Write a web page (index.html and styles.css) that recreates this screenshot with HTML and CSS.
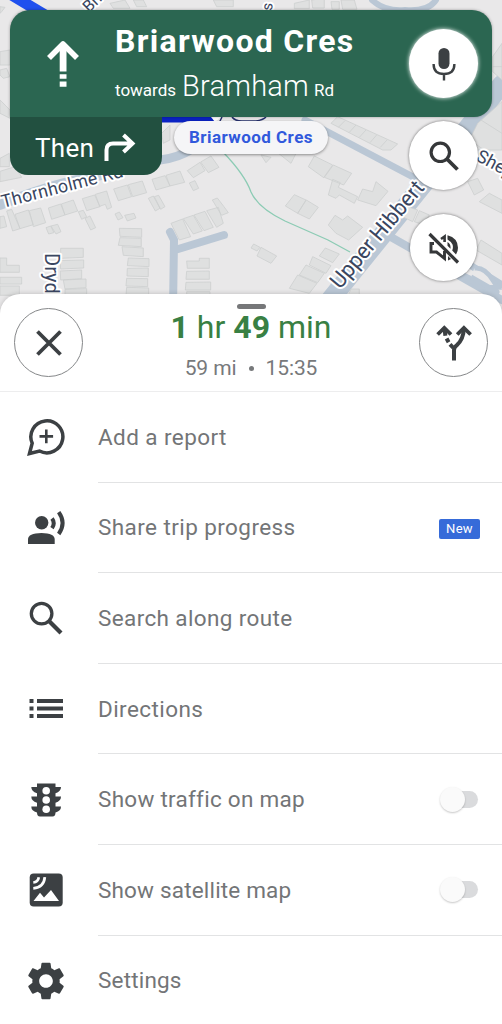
FILE: index.html
```html
<!DOCTYPE html>
<html lang="en">
<head>
<meta charset="utf-8">
<title>Navigation</title>
<link rel="stylesheet" href="styles.css">
</head>
<body>
<div class="phone">
  <svg class="map" viewBox="0 0 502 320" width="502" height="320">
    <g class="roads">
      <path d="M173 310L174 240L170 232M175 250L224 235" stroke-width="8"/>
      <path d="M160 160Q178 158 192 149" stroke-width="9"/>
      <path d="M0 205Q60 180 120 172" stroke-width="10"/>
      <path d="M322 310L430 176L502 84" stroke-width="19"/>
      <path d="M305 120L415 178" stroke-width="7"/>
      <path d="M382 232L502 300" stroke-width="8"/>
      <path d="M470 265L502 285M463 276L496 292" stroke-width="7"/>
      <path d="M372 0Q385 12 405 10Q428 12 436 0" stroke-width="6"/>
    </g>
    <path class="footpath" d="M223 152Q245 175 251 192Q258 208 285 221L328 240L350 252"/>
    <g class="buildings" transform="translate(0 150) scale(.3333)">
      <path d="M0 64L45 50L65 82L0 95zM0 200L12 198L20 230L0 235zM20 183L35 178L60 236L38 243zM45 193L85 180L100 224L60 236zM88 182L122 174L137 218L100 230zM145 174L182 162L195 195L155 208zM184 162L220 150L233 183L195 195zM235 185L250 181L260 200L245 208zM255 205L270 198L287 233L272 240zM247 146L284 135L300 170L260 182zM286 133L320 123L335 172L322 178L316 163L299 169zM341 117L382 105L395 140L355 152zM385 104L427 93L440 128L398 140zM456 88L495 77L510 108L468 120zM498 76L540 63L554 97L510 108zM562 62L600 37L615 62L580 83zM602 36L633 18L657 52L625 68zM568 99L585 92L596 115L580 122zM445 145L460 138L480 175L466 183zM463 140L476 136L495 170L482 178zM138 233L152 228L162 248L146 252zM153 228L173 223L183 245L168 252zM345 192L358 186L369 203L354 210zM374 196L402 190L408 204L382 213zM182 295H250V322L182 325zM180 332L251 330V354L182 357zM181 363L245 360V386L182 390zM190 390L258 387V413L195 417zM195 418L260 416V450H195zM358 235L425 236V262L360 259zM360 263L424 265V290L355 286zM366 290L430 294V320L370 316zM385 324L447 326V350L382 347zM382 355L445 354V380L381 378zM380 385L443 386V410L378 408zM380 412L446 414V440L378 437zM0 324H20V346H58V367H0zM0 382H65V402H0zM0 408H58V436H0zM513 220L548 207L572 260L538 270zM550 206L580 196L607 243L580 252zM582 195L615 184L640 232L612 242zM620 182L655 172L670 220L650 232zM637 150L652 144L672 170L685 188L665 196zM560 333H598V325H628V355H562zM560 364L628 363V388H558zM558 397L632 396V420H556zM560 425H630V445H560z"/>
    </g>
    <g class="buildings" transform="translate(251 150) scale(.3333)">
      <path d="M190 18L245 45L218 83L172 50zM247 45L302 70L278 105L220 82zM245 88L268 98L262 112L320 140L310 160L265 135L255 145L232 135zM335 117L365 125L375 95L411 124L375 167L320 150zM130 134L165 150L140 190L103 168zM166 150L202 172L175 207L140 190zM232 225L252 196L275 210L290 198L335 232L293 270L255 250zM30 292L77 318L60 340L18 318zM8 282L27 292L18 303L0 294zM223 294L265 312L245 338L205 318zM185 320L240 347L225 370L175 345zM165 345L220 370L200 398L145 375zM140 375L198 400L175 430L115 415zM30 15L60 22L45 38zM70 0H140L120 40zM300 417H325V440H290zM650 95L680 85L698 120L670 135zM715 130L753 150V190L685 155zM690 270L753 310V345L675 300zM470 170L500 180L485 215L455 200zM505 182L535 195L520 225L490 215z"/>
      <path class="outline" d="M670 355Q700 350 725 390L740 412L715 412L660 380"/>
    </g>
    <g class="buildings" transform="translate(251 0) scale(.3333)">
      <path d="M130 10L175 0V26H130zM182 0L220 -5V24H185zM240 5H265V28H243zM270 0H310L318 28H275zM240 370L260 350L440 432L420 450L395 450zM262 382L282 362M295 397L315 375M325 412L345 390M357 428L377 405M388 442L408 420M725 170L753 130V240L725 215zM725 200L753 200M680 370L753 305V450H640zM640 410L700 450M690 360L753 400"/>
    </g>
    <g class="buildings" transform="scale(.3333)">
      <path d="M0 20L15 22L5 35L0 40zM0 155L30 150V195H0zM0 210L20 205L30 230L10 235L0 225zM0 300L30 330V355L0 340zM330 10L375 0L390 25H340zM400 0H430L440 20H410zM640 0H700V20H650zM485 400L510 375V420L490 430zM0 475L28 460V500H0z"/>
    </g>
    <path class="route" d="M10 -6L50 18"/>
    <path class="route-dark" d="M155 119.5H214"/>
    <path d="M211 117L215 122L221 117z" fill="#fff"/>
    <path d="M219 123L222 117M232 117Q235 121 242 121H256Q263 120 266 117" fill="none" stroke="#26306e" stroke-width="1.5"/>
    <g class="labels">
      <text transform="translate(89 13) rotate(-44)" font-size="16">Briar</text>
      <text transform="translate(272 11) rotate(-85)" font-size="15">s</text>
      <text transform="translate(3 208) rotate(-14.5)" font-size="18" textLength="125">Thornholme Rd</text>
      <text transform="translate(45 253) rotate(90)" font-size="20">Dryd</text>
      <text transform="translate(340 290) rotate(-50)" font-size="22" textLength="133">Upper Hibbert</text>
      <text transform="translate(475 160) rotate(28)" font-size="18">Shep</text>
    </g>
  </svg>

  <div class="road-pill">Briarwood Cres</div>

  <header class="turn">
    <svg class="turn-arrow" viewBox="0 0 34 50" width="34" height="50">
      <path d="M3 19L17 5L31 19" fill="none" stroke="#fff" stroke-width="5.6" stroke-linejoin="round"/>
      <path d="M13.7 6h6.8v26.5h-6.8zM13.7 35.3h6.8v4.4h-6.8zM13.7 42.4h6.8v5.3h-6.8z" fill="#fff"/>
    </svg>
    <div class="turn-text">
      <div class="street">Briarwood Cres</div>
      <div class="towards"><span class="small">towards</span><span class="big">Bramham</span><span class="small rd">Rd</span></div>
    </div>
    <button class="bubble mic" aria-label="Voice">
      <svg viewBox="0 0 24 34" width="24" height="34">
        <rect x="6.5" y="1" width="11" height="21" rx="5.5" fill="#3c4043"/>
        <path d="M1.6 17Q1.6 27 12 27Q22.4 27 22.4 17M12 27V33.5" fill="none" stroke="#3c4043" stroke-width="2.4"/>
      </svg>
    </button>
  </header>

  <div class="under">
    <div class="then"><span>Then</span>
      <svg viewBox="0 0 32 30" width="32" height="30"><path d="M2.5 28V17Q2.5 10.5 9 10.5H28M19.5 2L28.5 10.5L19.5 19" fill="none" stroke="#fff" stroke-width="4"/></svg>
    </div>
    <div class="side">
      <button class="bubble search" aria-label="Search">
        <svg viewBox="0 0 32 32" width="32" height="32" fill="none" stroke="#353739"><circle cx="12.3" cy="12.3" r="9.2" stroke-width="3.2"/><path d="M19 19L29.5 29.5" stroke-width="3.8"/></svg>
      </button>
      <button class="bubble mute" aria-label="Muted">
        <svg viewBox="0 0 34 34" width="34" height="34" fill="none" stroke="#353739">
          <path d="M7 12.5H4V21H9.500L17.500 27.500V20" stroke-width="2.900"/>
          <path d="M14 8L17.600 5.500V11" stroke-width="2.600"/>
          <path d="M20.500 4.200Q31 7 31 16.800Q31 20.500 29 23.400L25.200 19.500Q26.500 16.500 25.500 13.500Q24 10.500 20.500 8.500zM20.500 11Q24 13 23.500 17.800L20.500 14.800zM21 25L24 28L21 29.500z" fill="#353739" stroke="none"/>
          <path d="M2.500 3L31 31.500" stroke-width="3.200"/>
        </svg>
      </button>
    </div>
  </div>

  <main class="sheet">
    <div class="summary">
      <button class="ring" aria-label="Close"><svg viewBox="0 0 26 26" width="26" height="26"><path d="M1.5 1.5L24.5 24.5M24.5 1.5L1.5 24.5" stroke="#3c4043" stroke-width="3.8"/></svg></button>
      <div class="eta">
        <span class="handle"></span>
        <div class="time"><b>1</b> hr <b>49</b> min</div>
        <div class="meta"><span>59 mi</span><i></i><span>15:35</span></div>
      </div>
      <button class="ring" aria-label="Alternate routes">
        <svg viewBox="0 0 36 38" width="36" height="38" fill="none" stroke="#3c4043">
          <path d="M18 36.500V26Q18 23.500 21 21Q27.500 15 27.800 5" stroke-width="4"/>
          <path d="M21.200 10.500L27.900 4L34.600 10.500M1.600 10.500L8.300 4L15 10.500" stroke-width="3.800"/>
          <path d="M8.500 5L9.400 11.800M10.600 14.500L12.600 18.300M14 20.300L17.500 24" stroke-width="4"/>
        </svg>
      </button>
    </div>

    <ul class="menu">
      <li class="row"><span class="icon"><svg viewBox="0 0 38 38" width="38" height="38" fill="none" stroke="#3c4043"><path d="M2.5 35.5L5.2 25.2A16 16 0 1 1 12.5 33z" stroke-width="3.5"/><path d="M19.3 11.6V25.2M12.5 18.4H26.1" stroke-width="2.6"/></svg></span>
        <div class="cell"><span class="t1">Add a report</span></div></li>
      <li class="row"><span class="icon"><svg viewBox="0 0 38 38" width="38" height="38" fill="#3c4043"><circle cx="14.7" cy="13.8" r="6.7"/><path d="M1 35V30.5Q1 24 14.5 24Q27.7 24 27.7 30.5V35z"/><path d="M25 9.500Q28.500 14 25 19.200M31.700 3.200Q39.500 14 31.700 25" fill="none" stroke="#3c4043" stroke-width="4"/></svg></span>
        <div class="cell"><span class="t1">Share trip progress</span><em class="badge">New</em></div></li>
      <li class="row"><span class="icon"><svg viewBox="0 0 38 38" width="38" height="38" fill="none" stroke="#3c4043"><circle cx="14.6" cy="14.6" r="10.3" stroke-width="3.3"/><path d="M22 22L34 34" stroke-width="4.2"/></svg></span>
        <div class="cell"><span class="t2">Search along route</span></div></li>
      <li class="row"><span class="icon"><svg viewBox="0 0 38 38" width="38" height="38" fill="#3c4043"><path d="M2.500 9h4v4h-4zM2.500 16.500h4v4h-4zM2.500 24h4v4h-4zM10 9h26v4H10zM10 16.500h26v4H10zM10 24h26v4H10z"/></svg></span>
        <div class="cell"><span class="t1">Directions</span></div></li>
      <li class="row"><span class="icon"><svg viewBox="0 0 38 38" width="38" height="38"><path fill="#3c4043" d="M10 2.500H28.500V6H34Q34 10.500 28.500 12.200V15.500H34Q34 20 28.500 21.700V25.500H34Q34 30 28.500 31.500Q28.500 35.500 25.500 35.500H13Q10 35.500 10 31.500Q4.300 30 4.300 25.500H10V21.700Q4.300 20 4.300 15.500H10V12.200Q4.300 10.500 4.300 6H10z"/><g fill="#fff"><circle cx="19.200" cy="9.700" r="3.800"/><circle cx="19.200" cy="19" r="3.800"/><circle cx="19.200" cy="28.300" r="3.800"/></g></svg></span>
        <div class="cell"><span class="t3">Show traffic on map</span><span class="switch"></span></div></li>
      <li class="row"><span class="icon"><svg viewBox="0 0 38 38" width="38" height="38"><rect x="2.700" y="2.500" width="33" height="33" rx="4" fill="#3c4043"/><path fill="#fff" d="M6.500 30L13 21.700L17 26.600L24 19L32 30z"/><path d="M6.300 11.500Q11 11 11.800 6.200M6.300 17.300Q17 16.500 17.800 6.200" fill="none" stroke="#fff" stroke-width="2.700"/></svg></span>
        <div class="cell"><span class="t4">Show satellite map</span><span class="switch"></span></div></li>
      <li class="row"><span class="icon"><svg viewBox="2 2 20 20" width="38" height="38"><path fill="#3c4043" d="M19.140 12.940c.04-.3.060-.61.060-.94 0-.32-.02-.64-.07-.94l2.030-1.580c.18-.14.230-.41.120-.61l-1.920-3.320c-.12-.22-.37-.29-.59-.22l-2.390.960c-.5-.38-1.030-.7-1.620-.94l-.36-2.540c-.04-.24-.24-.41-.48-.41h-3.840c-.24 0-.43.170-.47.410l-.36 2.540c-.59.240-1.130.570-1.620.940l-2.390-.96c-.22-.08-.47 0-.59.220L2.740 8.870c-.12.210-.08.470.12.610l2.030 1.580c-.05.300-.09.630-.09.940s.02.640.07.940l-2.030 1.580c-.18.140-.23.410-.12.610l1.920 3.320c.12.220.37.290.59.220l2.390-.96c.5.380 1.030.7 1.620.94l.36 2.540c.05.240.24.410.48.410h3.840c.24 0 .44-.17.470-.41l.36-2.540c.59-.24 1.130-.56 1.620-.94l2.390.960c.22.080.47 0 .59-.22l1.920-3.320c.12-.22.070-.47-.12-.61l-2.010-1.580zM12 15.600c-1.980 0-3.600-1.620-3.600-3.600s1.620-3.600 3.600-3.600 3.600 1.620 3.600 3.600-1.620 3.600-3.600 3.600z"/></svg></span>
        <div class="cell"><span class="t4">Settings</span></div></li>
    </ul>
  </main>
</div>
</body>
</html>
```

FILE: styles.css
```css
* { box-sizing: border-box; }
body { margin: 0; background: #fff; font-family: Roboto, "Open Sans", sans-serif; }
button { border: 0; padding: 0; background: #fff; display: flex; align-items: center; justify-content: center; }
svg { display: block; flex: none; }

.phone { position: relative; width: 502px; height: 1024px; overflow: hidden; display: flex; flex-direction: column; background: #e9e8e9; }

.map { position: absolute; left: 0; top: 0; }
.roads path { fill: none; stroke: #bac7d5; stroke-linecap: round; }
.footpath { fill: none; stroke: #8ccbb4; stroke-width: 1.3; }
.buildings path { fill: #dfe0e0; stroke: #cdcfcf; stroke-width: 2.4; }
.buildings .outline { fill: #e9e8e9; stroke: #bac7d5; stroke-width: 14; }
.route { stroke: #1f50ee; stroke-width: 11; }
.route-dark { stroke: #0a22c4; stroke-width: 6; }
.labels { fill: #3a4660; stroke: #fff; stroke-width: 4px; stroke-linejoin: round; paint-order: stroke; font-weight: 450; }

.road-pill { position: absolute; left: 174px; top: 121px; width: 154px; height: 33px; border-radius: 17px; background: #f5f5f7; box-shadow: 0 1px 3px rgba(0,0,0,.4); color: #3159dc; font-weight: 700; font-size: 17px; line-height: 33px; text-align: center; letter-spacing: .45px; white-space: nowrap; }

.turn { position: relative; flex: none; margin: 10px 10px 0; height: 107px; padding: 0 14px 0 36px; display: flex; align-items: center; background: #2b6651; border-radius: 20px 20px 18px 0; color: #fff; box-shadow: 0 0 3px rgba(0,0,0,.35); }
.turn-text { margin-left: 35px; flex: 1; white-space: nowrap; padding-top: 5px; }
.street { font-size: 32px; line-height: 38px; font-weight: 700; letter-spacing: 1.3px; }
.towards { display: flex; align-items: baseline; line-height: 40px; margin-top: 6px; }
.small { font-size: 17px; }
.big { font-size: 29px; margin-left: 6px; font-weight: 300; letter-spacing: .2px; }
.rd { margin-left: 5px; }
.bubble { flex: none; border-radius: 50%; width: 69px; height: 69px; }
.mic { box-shadow: 0 0 4px #fff; }

.under { position: relative; flex: none; height: 177px; padding: 0 24px 0 10px; display: flex; justify-content: space-between; align-items: flex-start; }
.then { width: 152px; height: 58px; padding: 3px 26px 0 25px; display: flex; align-items: center; justify-content: space-between; background: #225040; color: #fff; border-radius: 0 0 18px 18px; font-size: 26px; letter-spacing: .3px; }
.side { display: flex; flex-direction: column; align-items: center; gap: 24px; padding-top: 4px; }
.side .bubble { box-shadow: 0 0 3px rgba(0,0,0,.55); }
.side .mute { width: 67px; height: 67px; }

.sheet { position: relative; flex: none; height: 730px; background: #fff; border-radius: 20px 20px 0 0; box-shadow: 0 0 5px rgba(0,0,0,.2); }
.summary { height: 98px; padding: 0 14px; display: flex; align-items: center; justify-content: space-between; border-bottom: 1px solid #ededee; }
.ring { width: 69px; height: 69px; border: 1.5px solid #858789; border-radius: 50%; }
.eta { height: 97px; display: flex; flex-direction: column; align-items: center; padding-top: 10px; white-space: nowrap; }
.handle { width: 29px; height: 5px; border-radius: 3px; background: #767779; }
.time { margin-top: 1px; font-size: 32px; line-height: 34px; color: #398043; }
.meta { margin-top: 11px; display: flex; align-items: center; font-size: 21px; line-height: 26px; color: #77797b; letter-spacing: -.1px; }
.meta i { width: 5px; height: 5px; border-radius: 50%; background: #77797b; margin: 0 12px; }

.menu { margin: 0; padding: 0; list-style: none; }
.row { height: 90.6px; display: flex; }
.icon { width: 98px; padding-left: 27px; display: flex; align-items: center; }
.cell { flex: 1; display: flex; align-items: center; justify-content: space-between; padding-right: 22px; border-bottom: 1px solid #e2e3e4; color: #737577; font-size: 22.5px; white-space: nowrap; }
.row:last-child .cell { border-bottom-color: transparent; }
.t1 { letter-spacing: .42px; }
.t2 { letter-spacing: .37px; }
.t3 { letter-spacing: .27px; }
.t4 { letter-spacing: .18px; }
.badge { width: 41px; height: 20px; border-radius: 2px; background: #366bd9; color: #fff; font: 400 13px/20px Roboto, sans-serif; letter-spacing: .3px; text-align: center; margin-top: 4px; }
.switch { position: relative; width: 33px; height: 17px; margin-right: 2px; border-radius: 9px; background: #dadbdd; }
.switch::before { content: ""; position: absolute; left: -5px; top: -4px; width: 25px; height: 25px; border-radius: 50%; background: #fafafa; box-shadow: 0 1px 2px rgba(0,0,0,.22); }
```
